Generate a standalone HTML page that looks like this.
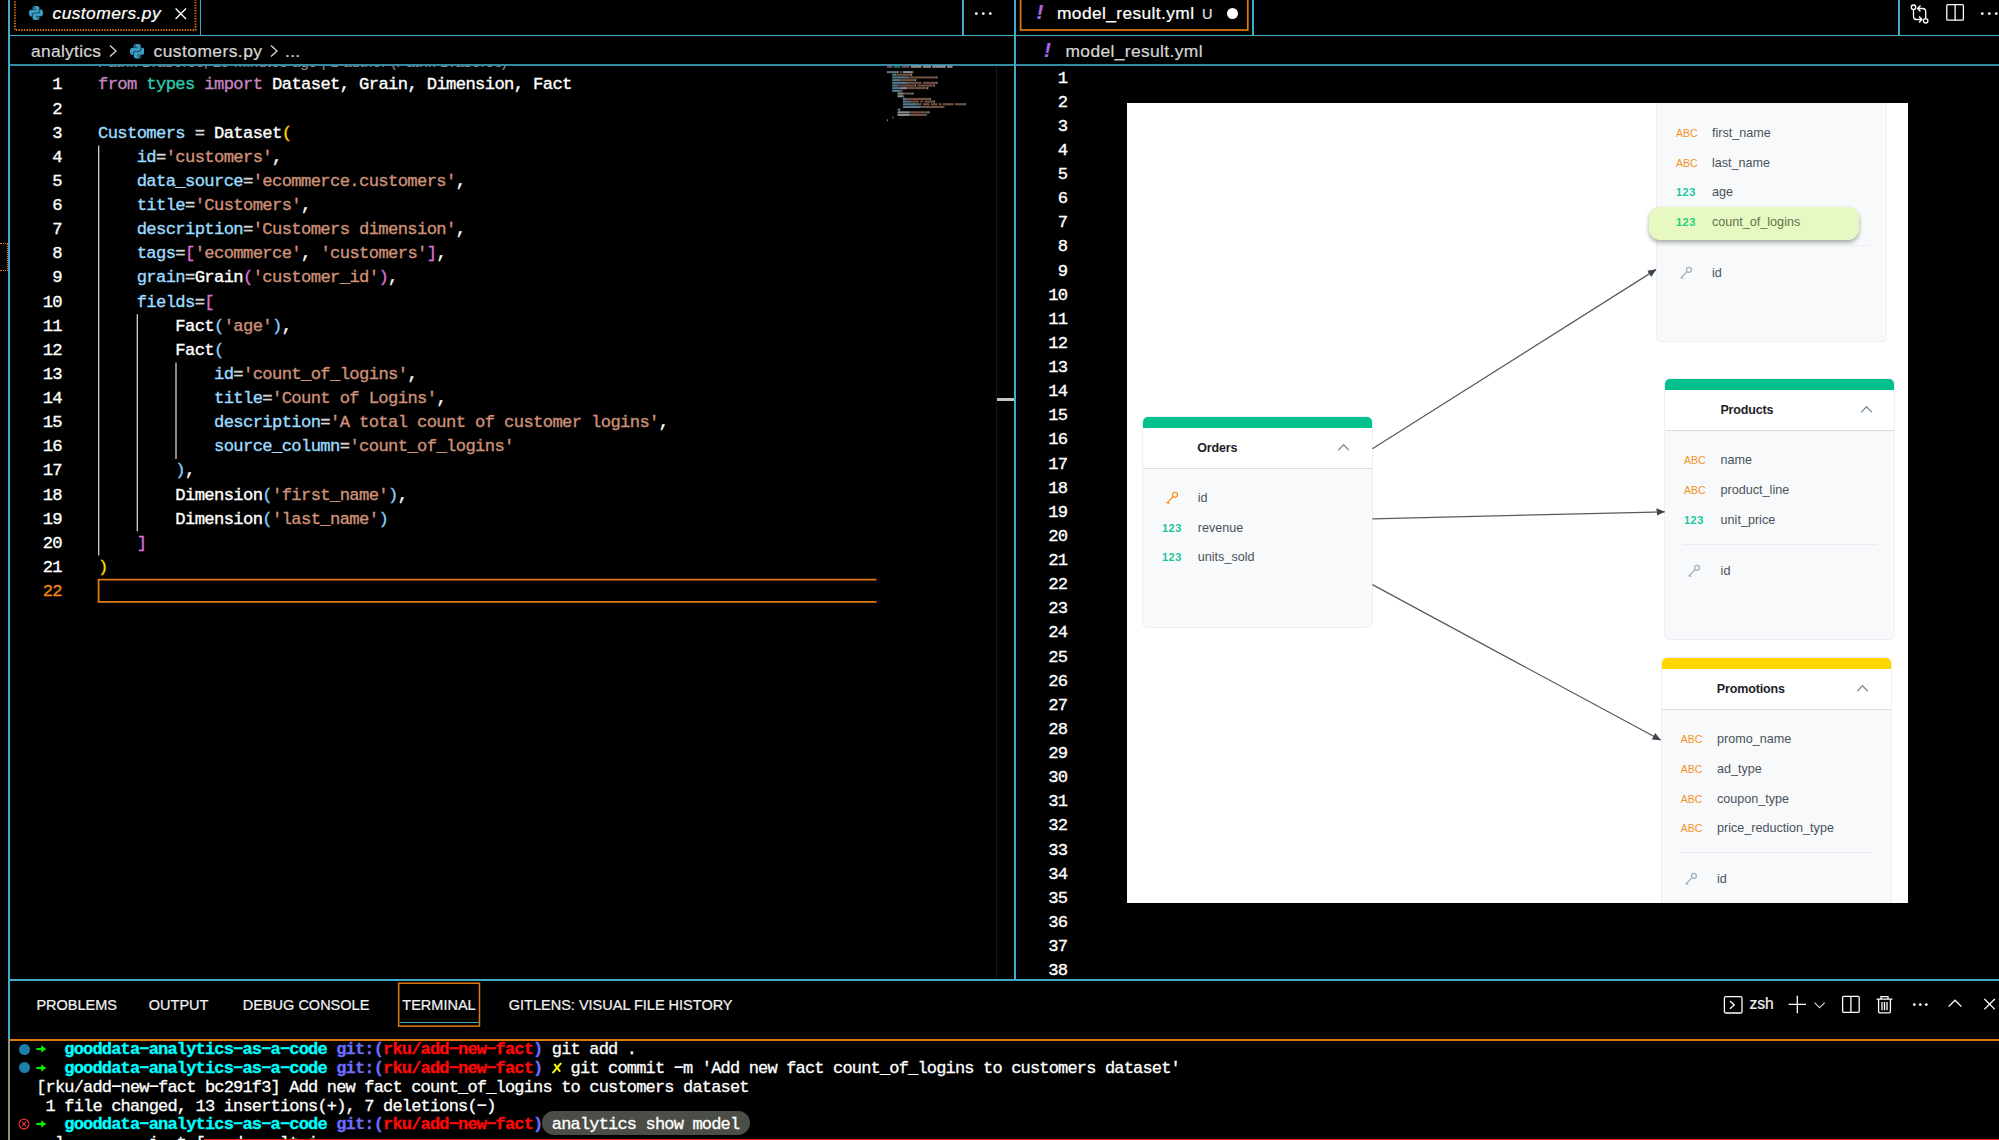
<!DOCTYPE html>
<html><head><meta charset="utf-8">
<style>
html,body{margin:0;padding:0;background:#000;overflow:hidden;}
body{width:1999px;height:1140px;overflow:hidden;position:relative;font-family:"Liberation Sans",sans-serif;color:#fff;}
.abs{position:absolute;}
.cy{position:absolute;background:#43a9c9;}
.or{position:absolute;background:#e07a10;}
.ui{-webkit-text-stroke:.22px;position:absolute;white-space:nowrap;font-family:"Liberation Sans",sans-serif;color:#fff;}
.code{position:absolute;left:0;top:0;font-family:"Liberation Mono",monospace;font-size:17.2px;letter-spacing:-0.6467px;line-height:24.125px;white-space:pre;color:#fff;}
.ln{position:absolute;font-family:"Liberation Mono",monospace;font-size:17.2px;letter-spacing:-0.6467px;line-height:24.125px;white-space:pre;color:#fff;text-align:right;}
.k{color:#c586c0}.t{color:#30c8aa}.v{color:#9cdcfe}.s{color:#ce9178}.b1{color:#ffd700}.b2{color:#da70d6}.b3{color:#87cefa}.o{color:#d4d4d4}
.term{position:absolute;font-family:"Liberation Mono",monospace;font-size:15.62px;line-height:18.75px;white-space:pre;color:#fff;}
.term b{font-weight:bold}
.tc{color:#00ffff}.tb{color:#6c6cff}.tr{color:#ff0808}.tg{color:#00f000}.ty{color:#f0f000}

.dl{position:absolute;white-space:nowrap;font-family:"Liberation Sans",sans-serif;font-size:10.5px;line-height:14px;}
.abc{color:#f5921e;letter-spacing:0px}
.n123{color:#1cc59e;font-weight:bold;font-size:11px;letter-spacing:.5px}
.dt{position:absolute;white-space:nowrap;font-family:"Liberation Sans",sans-serif;font-size:12.6px;line-height:16px;color:#4a525a}
.dtitle{position:absolute;white-space:nowrap;font-family:"Liberation Sans",sans-serif;font-size:12.5px;line-height:17px;color:#1c2228;font-weight:bold;letter-spacing:-.15px}

.pt{top:995px;font-size:14.5px;line-height:20px;color:#f2f2f2;letter-spacing:0}
.term{font-size:17.0px;letter-spacing:-0.8267px;-webkit-text-stroke:.3px}
.code,.ln{-webkit-text-stroke:.35px}
</style></head><body>
<!-- frame lines -->
<div class="cy" style="left:8px;top:0;width:2px;height:1140px"></div>
<div class="cy" style="left:8px;top:35px;width:1991px;height:1.4px"></div>
<div class="cy" style="left:8px;top:64.4px;width:1991px;height:1.4px;opacity:.8"></div>
<div class="cy" style="left:1014px;top:0;width:2px;height:980px"></div>
<div class="cy" style="left:8px;top:979px;width:1991px;height:2px"></div>

<!-- left tab -->

<!-- left tab bar -->
<div class="cy" style="left:199.5px;top:0;width:1.6px;height:35px"></div>
<svg class="abs" style="left:0;top:0" width="220" height="36"><rect x="14.9" y="-5" width="180.6" height="35" fill="none" stroke="#d9730c" stroke-width="1.9" stroke-dasharray="1.34 1.34"/></svg>
<svg class="abs" style="left:29px;top:5.8px" width="14" height="14" viewBox="0 0 24 24"><path fill="#3a9bc2" d="M14.25.18l.9.2.73.26.59.3.45.32.34.34.25.34.16.33.1.3.04.26.02.2-.01.13V8.5l-.05.63-.13.55-.21.46-.26.38-.3.31-.33.25-.35.19-.35.14-.33.1-.3.07-.26.04-.21.02H8.77l-.69.05-.59.14-.5.22-.41.27-.33.32-.27.35-.2.36-.15.37-.1.35-.07.32-.04.27-.02.21v3.06H3.17l-.21-.03-.28-.07-.32-.12-.35-.18-.36-.26-.36-.36-.35-.46-.32-.59-.28-.73-.21-.88-.14-1.05-.05-1.23.06-1.22.16-1.04.24-.87.32-.71.36-.57.4-.44.42-.33.42-.24.4-.16.36-.1.32-.05.24-.01h.16l.06.01h8.16v-.83H6.18l-.01-2.75-.02-.37.05-.34.11-.31.17-.28.25-.26.31-.23.38-.2.44-.18.51-.15.58-.12.64-.1.71-.06.77-.04.84-.02 1.27.05zm-6.3 1.98l-.23.33-.08.41.08.41.23.34.33.22.41.09.41-.09.33-.22.23-.34.08-.41-.08-.41-.23-.33-.33-.22-.41-.09-.41.09zm13.09 3.95l.28.06.32.12.35.18.36.27.36.35.35.47.32.59.28.73.21.88.14 1.04.05 1.23-.06 1.23-.16 1.04-.24.86-.32.71-.36.57-.4.45-.42.33-.42.24-.4.16-.36.09-.32.05-.24.02-.16-.01h-8.22v.82h5.84l.01 2.76.02.36-.05.34-.11.31-.17.29-.25.25-.31.24-.38.2-.44.17-.51.15-.58.13-.64.09-.71.07-.77.04-.84.01-1.27-.04-1.07-.14-.9-.2-.73-.25-.59-.3-.45-.33-.34-.34-.25-.34-.16-.33-.1-.3-.04-.25-.02-.2.01-.13v-5.34l.05-.64.13-.54.21-.46.26-.38.3-.32.33-.24.35-.2.35-.14.33-.1.3-.06.26-.04.21-.02.13-.01h5.84l.69-.05.59-.14.5-.21.41-.28.33-.32.27-.35.2-.36.15-.36.1-.35.07-.32.04-.28.02-.21V6.07h2.09l.14.01zm-6.47 14.25l-.23.33-.08.41.08.41.23.33.33.23.41.08.41-.08.33-.23.23-.33.08-.41-.08-.41-.23-.33-.33-.23-.41-.08-.41.08z"/></svg>
<div class="ui" style="left:52.5px;top:2px;font-size:17.4px;line-height:22px;font-style:italic;letter-spacing:.43px">customers.py</div>
<svg class="abs" style="left:174px;top:6px" width="14" height="14" viewBox="0 0 14 14"><path d="M1.6 2.6L12 13M12 2.6L1.6 13" stroke="#fff" stroke-width="1.35" fill="none"/></svg>
<div class="cy" style="left:962px;top:0;width:1.5px;height:35px"></div>
<svg class="abs" style="left:974px;top:10px" width="20" height="8"><circle cx="2.3" cy="3.6" r="1.35" fill="#fff"/><circle cx="9.3" cy="3.6" r="1.35" fill="#fff"/><circle cx="16.3" cy="3.6" r="1.35" fill="#fff"/></svg>
<!-- left breadcrumb -->
<div class="ui" style="left:31px;top:40px;font-size:17.4px;line-height:22px;letter-spacing:.3px;color:#d6d6d6">analytics</div>
<svg class="abs" style="left:108px;top:44px" width="10" height="14" viewBox="0 0 10 14"><path d="M2 1.5L8 7L2 12.5" stroke="#d8d8d8" stroke-width="1.3" fill="none"/></svg>
<svg class="abs" style="left:129.5px;top:44px" width="14.5" height="14.5" viewBox="0 0 24 24"><path fill="#3a9bc2" d="M14.25.18l.9.2.73.26.59.3.45.32.34.34.25.34.16.33.1.3.04.26.02.2-.01.13V8.5l-.05.63-.13.55-.21.46-.26.38-.3.31-.33.25-.35.19-.35.14-.33.1-.3.07-.26.04-.21.02H8.77l-.69.05-.59.14-.5.22-.41.27-.33.32-.27.35-.2.36-.15.37-.1.35-.07.32-.04.27-.02.21v3.06H3.17l-.21-.03-.28-.07-.32-.12-.35-.18-.36-.26-.36-.36-.35-.46-.32-.59-.28-.73-.21-.88-.14-1.05-.05-1.23.06-1.22.16-1.04.24-.87.32-.71.36-.57.4-.44.42-.33.42-.24.4-.16.36-.1.32-.05.24-.01h.16l.06.01h8.16v-.83H6.18l-.01-2.75-.02-.37.05-.34.11-.31.17-.28.25-.26.31-.23.38-.2.44-.18.51-.15.58-.12.64-.1.71-.06.77-.04.84-.02 1.27.05zm-6.3 1.98l-.23.33-.08.41.08.41.23.34.33.22.41.09.41-.09.33-.22.23-.34.08-.41-.08-.41-.23-.33-.33-.22-.41-.09-.41.09zm13.09 3.95l.28.06.32.12.35.18.36.27.36.35.35.47.32.59.28.73.21.88.14 1.04.05 1.23-.06 1.23-.16 1.04-.24.86-.32.71-.36.57-.4.45-.42.33-.42.24-.4.16-.36.09-.32.05-.24.02-.16-.01h-8.22v.82h5.84l.01 2.76.02.36-.05.34-.11.31-.17.29-.25.25-.31.24-.38.2-.44.17-.51.15-.58.13-.64.09-.71.07-.77.04-.84.01-1.27-.04-1.07-.14-.9-.2-.73-.25-.59-.3-.45-.33-.34-.34-.25-.34-.16-.33-.1-.3-.04-.25-.02-.2.01-.13v-5.34l.05-.64.13-.54.21-.46.26-.38.3-.32.33-.24.35-.2.35-.14.33-.1.3-.06.26-.04.21-.02.13-.01h5.84l.69-.05.59-.14.5-.21.41-.28.33-.32.27-.35.2-.36.15-.36.1-.35.07-.32.04-.28.02-.21V6.07h2.09l.14.01zm-6.47 14.25l-.23.33-.08.41.08.41.23.33.33.23.41.08.41-.08.33-.23.23-.33.08-.41-.08-.41-.23-.33-.33-.23-.41-.08-.41.08z"/></svg>
<div class="ui" style="left:153.6px;top:40px;font-size:17.4px;line-height:22px;letter-spacing:.45px;color:#d6d6d6">customers.py</div>
<svg class="abs" style="left:269px;top:44px" width="10" height="14" viewBox="0 0 10 14"><path d="M2 1.5L8 7L2 12.5" stroke="#d8d8d8" stroke-width="1.3" fill="none"/></svg>
<div class="ui" style="left:285px;top:40px;font-size:17.4px;line-height:22px;letter-spacing:.3px;color:#d6d6d6">...</div>

<!-- right tab -->

<!-- right tab bar -->
<svg class="abs" style="left:1010px;top:0" width="250" height="36"><rect x="10.6" y="-5" width="227.2" height="35" fill="none" stroke="#e07a10" stroke-width="1.7"/></svg>
<div class="cy" style="left:1252px;top:0;width:1.5px;height:35px"></div>
<div class="ui" style="left:1036.5px;top:1px;font-size:20.5px;line-height:22px;font-style:italic;color:#a967e0;font-weight:bold">!</div>
<div class="ui" style="left:1057px;top:2px;font-size:17.4px;line-height:22px;letter-spacing:.37px">model_result.yml</div>
<div class="ui" style="left:1202px;top:4px;font-size:14.5px;line-height:20px;color:#e0e0e0">U</div>
<div class="abs" style="left:1227px;top:8px;width:11px;height:11px;border-radius:50%;background:#fff"></div>
<div class="cy" style="left:1898.4px;top:0;width:1.5px;height:35px"></div>
<!-- right actions -->
<svg class="abs" style="left:1908px;top:2px" width="24" height="24" viewBox="0 0 24 24" fill="none" stroke="#fff" stroke-width="1.3"><circle cx="5.5" cy="5.2" r="2.2"/><circle cx="17.7" cy="18.8" r="2.2"/><path d="M5.5 7.4V14.5a3 3 0 0 0 3 3H13.5M11 14.5l3 3-3 3"/><path d="M17.7 16.6V9.5a3 3 0 0 0-3-3H10M12.5 3.5l-3 3 3 3"/></svg>
<svg class="abs" style="left:1945px;top:3px" width="22" height="20" viewBox="0 0 22 20" fill="none" stroke="#fff" stroke-width="1.3"><rect x="1.8" y="1.6" width="16.6" height="15.6" rx="1"/><path d="M10.1 1.6V17.2"/></svg>
<svg class="abs" style="left:1980px;top:10px" width="20" height="8"><circle cx="2.3" cy="3.6" r="1.35" fill="#fff"/><circle cx="9.3" cy="3.6" r="1.35" fill="#fff"/><circle cx="16.3" cy="3.6" r="1.35" fill="#fff"/></svg>
<!-- right breadcrumb -->
<div class="ui" style="left:1044px;top:39px;font-size:20.5px;line-height:22px;font-style:italic;color:#a967e0;font-weight:bold">!</div>
<div class="ui" style="left:1065.5px;top:40px;font-size:17.4px;line-height:22px;letter-spacing:.37px;color:#d6d6d6">model_result.yml</div>

<!-- left editor -->

<!-- left editor -->
<div class="abs" style="left:10px;top:66px;width:1004px;height:12px;overflow:hidden"><div class="ui" style="left:88px;top:-13.2px;font-size:14.6px;line-height:18px;color:#8c8c8c;letter-spacing:.35px">Patrik Braborec, 15 minutes ago | 1 author (Patrik Braborec)</div></div>
<div class="ln" style="left:19.4px;top:73.45px;width:42.6px">1
2
3
4
5
6
7
8
9
10
11
12
13
14
15
16
17
18
19
20
21
<span style="color:#f38518">22</span></div>
<div class="code" style="left:98px;top:73.45px"><span class="k">from</span> <span class="t">types</span> <span class="k">import</span> Dataset, Grain, Dimension, Fact

<span class="v">Customers</span> <span class="o">=</span> Dataset<span class="b1">(</span>
    <span class="v">id</span><span class="o">=</span><span class="s">'customers'</span>,
    <span class="v">data_source</span><span class="o">=</span><span class="s">'ecommerce.customers'</span>,
    <span class="v">title</span><span class="o">=</span><span class="s">'Customers'</span>,
    <span class="v">description</span><span class="o">=</span><span class="s">'Customers dimension'</span>,
    <span class="v">tags</span><span class="o">=</span><span class="b2">[</span><span class="s">'ecommerce'</span>, <span class="s">'customers'</span><span class="b2">]</span>,
    <span class="v">grain</span><span class="o">=</span>Grain<span class="b2">(</span><span class="s">'customer_id'</span><span class="b2">)</span>,
    <span class="v">fields</span><span class="o">=</span><span class="b2">[</span>
        Fact<span class="b3">(</span><span class="s">'age'</span><span class="b3">)</span>,
        Fact<span class="b3">(</span>
            <span class="v">id</span><span class="o">=</span><span class="s">'count_of_logins'</span>,
            <span class="v">title</span><span class="o">=</span><span class="s">'Count of Logins'</span>,
            <span class="v">description</span><span class="o">=</span><span class="s">'A total count of customer logins'</span>,
            <span class="v">source_column</span><span class="o">=</span><span class="s">'count_of_logins'</span>
        <span class="b3">)</span>,
        Dimension<span class="b3">(</span><span class="s">'first_name'</span><span class="b3">)</span>,
        Dimension<span class="b3">(</span><span class="s">'last_name'</span><span class="b3">)</span>
    <span class="b2">]</span>
<span class="b1">)</span>
</div>
<svg class="abs" style="left:90px;top:570px" width="790" height="40"><path d="M786.5 9.7H8.6V31.9H786.5" fill="none" stroke="#e07a10" stroke-width="1.8"/></svg>
<svg class="abs" style="left:0;top:0" width="300" height="700"><g stroke="#d2d2d2" stroke-width="1.3"><path d="M98.7 145.5V555.4M137.3 314.3V531.3M176 362.5V458.9"/></g></svg>
<!-- scrollbar / overview -->
<div class="abs" style="left:995.5px;top:66px;width:1.5px;height:913px;background:#181818"></div>
<div class="abs" style="left:997px;top:398px;width:17px;height:2.6px;background:#c4c4c4"></div>
<div class="abs" style="left:0;top:243px;width:8px;height:28px;box-sizing:border-box;border:1.4px dotted #e07a10;border-left:none"></div>
<svg class="abs" style="left:0;top:0" width="1020" height="130" opacity=".55"><rect x="886.8" y="65.7" width="5.4" height="2.1" fill="#c586c0"/><rect x="893.5" y="65.7" width="6.7" height="2.1" fill="#3ec9b0"/><rect x="901.5" y="65.7" width="8.0" height="2.1" fill="#c586c0"/><rect x="910.9" y="65.7" width="10.7" height="2.1" fill="#ffffff"/><rect x="923.0" y="65.7" width="8.0" height="2.1" fill="#ffffff"/><rect x="932.3" y="65.7" width="13.4" height="2.1" fill="#ffffff"/><rect x="947.1" y="65.7" width="5.4" height="2.1" fill="#ffffff"/><rect x="886.8" y="71.1" width="12.1" height="2.1" fill="#9cdcfe"/><rect x="900.2" y="71.1" width="1.3" height="2.1" fill="#d4d4d4"/><rect x="902.9" y="71.1" width="9.4" height="2.1" fill="#ffffff"/><rect x="912.2" y="71.1" width="1.3" height="2.1" fill="#ffd700"/><rect x="892.2" y="73.7" width="2.7" height="2.1" fill="#9cdcfe"/><rect x="894.8" y="73.7" width="1.3" height="2.1" fill="#d4d4d4"/><rect x="896.2" y="73.7" width="14.7" height="2.1" fill="#ce9178"/><rect x="910.9" y="73.7" width="1.3" height="2.1" fill="#ffffff"/><rect x="892.2" y="76.4" width="14.7" height="2.1" fill="#9cdcfe"/><rect x="906.9" y="76.4" width="1.3" height="2.1" fill="#d4d4d4"/><rect x="908.2" y="76.4" width="28.1" height="2.1" fill="#ce9178"/><rect x="936.3" y="76.4" width="1.3" height="2.1" fill="#ffffff"/><rect x="892.2" y="79.1" width="6.7" height="2.1" fill="#9cdcfe"/><rect x="898.9" y="79.1" width="1.3" height="2.1" fill="#d4d4d4"/><rect x="900.2" y="79.1" width="14.7" height="2.1" fill="#ce9178"/><rect x="914.9" y="79.1" width="1.3" height="2.1" fill="#ffffff"/><rect x="892.2" y="81.8" width="14.7" height="2.1" fill="#9cdcfe"/><rect x="906.9" y="81.8" width="1.3" height="2.1" fill="#d4d4d4"/><rect x="908.2" y="81.8" width="13.4" height="2.1" fill="#ce9178"/><rect x="923.0" y="81.8" width="13.4" height="2.1" fill="#ce9178"/><rect x="936.3" y="81.8" width="1.3" height="2.1" fill="#ffffff"/><rect x="892.2" y="84.5" width="5.4" height="2.1" fill="#9cdcfe"/><rect x="897.5" y="84.5" width="1.3" height="2.1" fill="#d4d4d4"/><rect x="898.9" y="84.5" width="1.3" height="2.1" fill="#da70d6"/><rect x="900.2" y="84.5" width="14.7" height="2.1" fill="#ce9178"/><rect x="914.9" y="84.5" width="1.3" height="2.1" fill="#ffffff"/><rect x="917.6" y="84.5" width="14.7" height="2.1" fill="#ce9178"/><rect x="932.3" y="84.5" width="1.3" height="2.1" fill="#da70d6"/><rect x="933.7" y="84.5" width="1.3" height="2.1" fill="#ffffff"/><rect x="892.2" y="87.1" width="6.7" height="2.1" fill="#9cdcfe"/><rect x="898.9" y="87.1" width="1.3" height="2.1" fill="#d4d4d4"/><rect x="900.2" y="87.1" width="6.7" height="2.1" fill="#ffffff"/><rect x="906.9" y="87.1" width="1.3" height="2.1" fill="#da70d6"/><rect x="908.2" y="87.1" width="17.4" height="2.1" fill="#ce9178"/><rect x="925.6" y="87.1" width="1.3" height="2.1" fill="#da70d6"/><rect x="927.0" y="87.1" width="1.3" height="2.1" fill="#ffffff"/><rect x="892.2" y="89.8" width="8.0" height="2.1" fill="#9cdcfe"/><rect x="900.2" y="89.8" width="1.3" height="2.1" fill="#d4d4d4"/><rect x="901.5" y="89.8" width="1.3" height="2.1" fill="#da70d6"/><rect x="897.5" y="92.5" width="5.4" height="2.1" fill="#ffffff"/><rect x="902.9" y="92.5" width="1.3" height="2.1" fill="#87cefa"/><rect x="904.2" y="92.5" width="6.7" height="2.1" fill="#ce9178"/><rect x="910.9" y="92.5" width="1.3" height="2.1" fill="#87cefa"/><rect x="912.2" y="92.5" width="1.3" height="2.1" fill="#ffffff"/><rect x="897.5" y="95.2" width="5.4" height="2.1" fill="#ffffff"/><rect x="902.9" y="95.2" width="1.3" height="2.1" fill="#87cefa"/><rect x="902.9" y="97.9" width="2.7" height="2.1" fill="#9cdcfe"/><rect x="905.5" y="97.9" width="1.3" height="2.1" fill="#d4d4d4"/><rect x="906.9" y="97.9" width="22.8" height="2.1" fill="#ce9178"/><rect x="929.6" y="97.9" width="1.3" height="2.1" fill="#ffffff"/><rect x="902.9" y="100.5" width="6.7" height="2.1" fill="#9cdcfe"/><rect x="909.6" y="100.5" width="1.3" height="2.1" fill="#d4d4d4"/><rect x="910.9" y="100.5" width="8.0" height="2.1" fill="#ce9178"/><rect x="920.3" y="100.5" width="2.7" height="2.1" fill="#ce9178"/><rect x="924.3" y="100.5" width="9.4" height="2.1" fill="#ce9178"/><rect x="933.7" y="100.5" width="1.3" height="2.1" fill="#ffffff"/><rect x="902.9" y="103.2" width="14.7" height="2.1" fill="#9cdcfe"/><rect x="917.6" y="103.2" width="1.3" height="2.1" fill="#d4d4d4"/><rect x="918.9" y="103.2" width="2.7" height="2.1" fill="#ce9178"/><rect x="923.0" y="103.2" width="6.7" height="2.1" fill="#ce9178"/><rect x="931.0" y="103.2" width="6.7" height="2.1" fill="#ce9178"/><rect x="939.0" y="103.2" width="2.7" height="2.1" fill="#ce9178"/><rect x="943.0" y="103.2" width="10.7" height="2.1" fill="#ce9178"/><rect x="955.1" y="103.2" width="9.4" height="2.1" fill="#ce9178"/><rect x="964.5" y="103.2" width="1.3" height="2.1" fill="#ffffff"/><rect x="902.9" y="105.9" width="17.4" height="2.1" fill="#9cdcfe"/><rect x="920.3" y="105.9" width="1.3" height="2.1" fill="#d4d4d4"/><rect x="921.6" y="105.9" width="22.8" height="2.1" fill="#ce9178"/><rect x="897.5" y="108.6" width="1.3" height="2.1" fill="#87cefa"/><rect x="898.9" y="108.6" width="1.3" height="2.1" fill="#ffffff"/><rect x="897.5" y="111.3" width="12.1" height="2.1" fill="#ffffff"/><rect x="909.6" y="111.3" width="1.3" height="2.1" fill="#87cefa"/><rect x="910.9" y="111.3" width="16.1" height="2.1" fill="#ce9178"/><rect x="927.0" y="111.3" width="1.3" height="2.1" fill="#87cefa"/><rect x="928.3" y="111.3" width="1.3" height="2.1" fill="#ffffff"/><rect x="897.5" y="113.9" width="12.1" height="2.1" fill="#ffffff"/><rect x="909.6" y="113.9" width="1.3" height="2.1" fill="#87cefa"/><rect x="910.9" y="113.9" width="14.7" height="2.1" fill="#ce9178"/><rect x="925.6" y="113.9" width="1.3" height="2.1" fill="#87cefa"/><rect x="892.2" y="116.6" width="1.3" height="2.1" fill="#da70d6"/><rect x="886.8" y="119.3" width="1.3" height="2.1" fill="#ffd700"/></svg>

<!-- right editor -->

<!-- right editor -->
<div class="ln" style="left:1029.2px;top:66.55px;width:38.3px">1
2
3
4
5
6
7
8
9
10
11
12
13
14
15
16
17
18
19
20
21
22
23
24
25
26
27
28
29
30
31
32
33
34
35
36
37
38</div>
<div class="abs" style="left:1126.5px;top:103px;width:781.5px;height:799.5px;background:#fff;overflow:hidden"></div><div class="abs" style="left:1656px;top:103px;width:231px;height:239px;box-sizing:border-box;background:#f8f9fb;border-radius:0 0 5px 5px;border:1px solid #eceff3;border-top:none"></div><div class="dl abc" style="left:1676px;top:126.0px">ABC</div><div class="dt" style="left:1712px;top:125.0px">first_name</div><div class="dl abc" style="left:1676px;top:155.5px">ABC</div><div class="dt" style="left:1712px;top:154.5px">last_name</div><div class="dl n123" style="left:1676px;top:185.0px">123</div><div class="dt" style="left:1712px;top:184.0px">age</div><div class="abs" style="left:1649px;top:206.8px;width:209.6px;height:33px;border-radius:11px;background:#e8f8c2;box-shadow:0 2.5px 4.5px rgba(60,70,60,.45)"></div><div class="dl n123" style="left:1676px;top:215.0px;color:#20d47c">123</div><div class="dt" style="left:1712px;top:214.0px;color:#5f744c">count_of_logins</div><div class="abs" style="left:1675px;top:245.4px;width:194px;height:1px;background:#e9ecf0"></div><svg class="abs" style="left:1679.0px;top:265.5px" width="14" height="14" viewBox="0 0 14 14" fill="none" stroke="#9fb0c0" stroke-width="1.3"><circle cx="10" cy="3.8" r="2.5"/><path d="M8.2 5.6L1.6 12.2M2.6 11.2L4.2 12.8"/></svg><div class="dt" style="left:1712px;top:265.0px">id</div><div class="abs" style="left:1143px;top:417.3px;width:229px;height:209.7px;background:#f8f9fb;border-radius:5px;box-shadow:0 0 0 1px #eceff3;overflow:hidden"><div class="abs" style="left:0;top:0;width:100%;height:50.5px;background:#fff;border-bottom:1.6px solid #d5dde5"></div><div class="abs" style="left:0;top:0;width:100%;height:11.2px;background:#00c18d"></div></div><div class="dtitle" style="left:1197.2px;top:439.6px">Orders</div><svg class="abs" style="left:1337px;top:443.1px" width="13" height="9" viewBox="0 0 13 9"><path d="M1.2 7.2L6.5 1.8L11.8 7.2" fill="none" stroke="#7d8fa0" stroke-width="1.3"/></svg><svg class="abs" style="left:1165.0px;top:490.5px" width="14" height="14" viewBox="0 0 14 14" fill="none" stroke="#f5921e" stroke-width="1.3"><circle cx="10" cy="3.8" r="2.5"/><path d="M8.2 5.6L1.6 12.2M2.6 11.2L4.2 12.8"/></svg><div class="dt" style="left:1197.8px;top:490.0px">id</div><div class="dl n123" style="left:1162px;top:520.8px">123</div><div class="dt" style="left:1197.8px;top:519.8px">revenue</div><div class="dl n123" style="left:1162px;top:550.3px">123</div><div class="dt" style="left:1197.8px;top:549.3px">units_sold</div><div class="abs" style="left:1665.3px;top:379.3px;width:228.5px;height:259.7px;background:#f8f9fb;border-radius:5px;box-shadow:0 0 0 1px #eceff3;overflow:hidden"><div class="abs" style="left:0;top:0;width:100%;height:50.9px;background:#fff;border-bottom:1.6px solid #d5dde5"></div><div class="abs" style="left:0;top:0;width:100%;height:11.2px;background:#00c18d"></div></div><div class="dtitle" style="left:1720.4px;top:401.9px">Products</div><svg class="abs" style="left:1859.5px;top:405.4px" width="13" height="9" viewBox="0 0 13 9"><path d="M1.2 7.2L6.5 1.8L11.8 7.2" fill="none" stroke="#7d8fa0" stroke-width="1.3"/></svg><div class="dl abc" style="left:1684px;top:453.4px">ABC</div><div class="dt" style="left:1720.6px;top:452.4px">name</div><div class="dl abc" style="left:1684px;top:483.4px">ABC</div><div class="dt" style="left:1720.6px;top:482.4px">product_line</div><div class="dl n123" style="left:1684px;top:512.9px">123</div><div class="dt" style="left:1720.6px;top:511.9px">unit_price</div><div class="abs" style="left:1683px;top:544px;width:194px;height:1px;background:#e9ecf0"></div><svg class="abs" style="left:1687.0px;top:563.5px" width="14" height="14" viewBox="0 0 14 14" fill="none" stroke="#9fb0c0" stroke-width="1.3"><circle cx="10" cy="3.8" r="2.5"/><path d="M8.2 5.6L1.6 12.2M2.6 11.2L4.2 12.8"/></svg><div class="dt" style="left:1720.6px;top:563.0px">id</div><div class="abs" style="left:1650px;top:650px;width:258px;height:252.5px;overflow:hidden"><div class="abs" style="left:-1650px;top:-650px"><div class="abs" style="left:1661.8px;top:658px;width:228.8px;height:282.0px;background:#f8f9fb;border-radius:5px;box-shadow:0 0 0 1px #eceff3;overflow:hidden"><div class="abs" style="left:0;top:0;width:100%;height:51.0px;background:#fff;border-bottom:1.6px solid #d5dde5"></div><div class="abs" style="left:0;top:0;width:100%;height:11.2px;background:#ffd600"></div></div><div class="dtitle" style="left:1716.8px;top:680.6px">Promotions</div><svg class="abs" style="left:1856px;top:684.1px" width="13" height="9" viewBox="0 0 13 9"><path d="M1.2 7.2L6.5 1.8L11.8 7.2" fill="none" stroke="#7d8fa0" stroke-width="1.3"/></svg><div class="dl abc" style="left:1680.7px;top:732.0px">ABC</div><div class="dt" style="left:1717px;top:731.0px">promo_name</div><div class="dl abc" style="left:1680.7px;top:761.6px">ABC</div><div class="dt" style="left:1717px;top:760.6px">ad_type</div><div class="dl abc" style="left:1680.7px;top:791.5px">ABC</div><div class="dt" style="left:1717px;top:790.5px">coupon_type</div><div class="dl abc" style="left:1680.7px;top:821.0px">ABC</div><div class="dt" style="left:1717px;top:820.0px">price_reduction_type</div><div class="abs" style="left:1679px;top:851.8px;width:195px;height:1px;background:#e9ecf0"></div><svg class="abs" style="left:1683.7px;top:871.5px" width="14" height="14" viewBox="0 0 14 14" fill="none" stroke="#9fb0c0" stroke-width="1.3"><circle cx="10" cy="3.8" r="2.5"/><path d="M8.2 5.6L1.6 12.2M2.6 11.2L4.2 12.8"/></svg><div class="dt" style="left:1717px;top:871.0px">id</div></div></div><svg class="abs" style="left:0;top:0" width="1999" height="1140"><defs><marker id="ah" viewBox="0 0 10 10" refX="9.5" refY="5" markerWidth="8.5" markerHeight="8.5" orient="auto" markerUnits="userSpaceOnUse"><path d="M0 0.6L10 5L0 9.4z" fill="#3f464d"/></marker></defs>
<g stroke="#555b62" stroke-width="1.25" fill="none"><path d="M1372.4 448.8L1656 269.6" marker-end="url(#ah)"/><path d="M1372.4 518.8L1664.6 511.8" marker-end="url(#ah)"/><path d="M1372.4 584.6L1660.6 740" marker-end="url(#ah)"/></g></svg>

<!-- panel -->

<!-- panel tabs -->
<div class="ui pt" style="left:36.4px">PROBLEMS</div>
<div class="ui pt" style="left:148.8px">OUTPUT</div>
<div class="ui pt" style="left:242.8px">DEBUG CONSOLE</div>
<div class="ui pt" style="left:402.3px">TERMINAL</div>
<div class="ui pt" style="left:508.8px">GITLENS: VISUAL FILE HISTORY</div>
<svg class="abs" style="left:390px;top:975px" width="100" height="60"><rect x="8.7" y="8.2" width="80.8" height="42.9" fill="none" stroke="#e07a10" stroke-width="1.5"/></svg>
<div class="cy" style="left:399.5px;top:1021.6px;width:79px;height:1.3px"></div>
<!-- panel actions -->
<svg class="abs" style="left:1722px;top:994px" width="280" height="22" viewBox="0 0 280 22" fill="none" stroke="#fff" stroke-width="1.3">
<rect x="2.4" y="2.6" width="17.6" height="16.4" rx="1.6"/><path d="M8 7L12.2 10.9L8 14.8"/>
<path d="M66.6 10.4H84M75.3 1.8V19.2"/>
<path d="M92.5 8.6L97.6 13.6L102.7 8.6" stroke="#cfcfcf" stroke-width="1.2"/>
<rect x="120.6" y="2.4" width="16.6" height="16" rx="1.2"/><path d="M128.9 2.4V18.4"/>
<path d="M154.5 5.2H170.5M159 5V2.6H166V5M156.6 5.4V17.6A1.2 1.2 0 0 0 157.8 18.8H167.2A1.2 1.2 0 0 0 168.4 17.6V5.4M160 8V16.2M162.5 8V16.2M165 8V16.2"/>
<g fill="#fff" stroke="none"><circle cx="192.3" cy="10.6" r="1.35"/><circle cx="198.3" cy="10.6" r="1.35"/><circle cx="204.3" cy="10.6" r="1.35"/></g>
<path d="M226.6 12.6L233 6.2L239.4 12.6"/>
<path d="M262.4 5L272.8 15.4M272.8 5L262.4 15.4"/>
</svg>
<div class="ui" style="left:1749.5px;top:994px;font-size:15.6px;line-height:20px;color:#f0f0f0">zsh</div>
<!-- terminal -->
<div class="or" style="left:9px;top:1039.3px;width:1990px;height:1.9px"></div>
<div class="or" style="left:9px;top:1039.6px;width:1.4px;height:101px"></div>
<div class="abs" style="left:541.6px;top:1111.2px;width:208.6px;height:23.8px;border-radius:11.9px;background:#4b4e47"></div>
<div class="term" style="left:36.2px;top:1041.4px">   <b class="tc">gooddata−analytics−as−a−code</b> <b class="tb">git:(</b><b class="tr">rku/add−new−fact</b><b class="tb">)</b> git add .
   <b class="tc">gooddata−analytics−as−a−code</b> <b class="tb">git:(</b><b class="tr">rku/add−new−fact</b><b class="tb">)</b>   git commit −m 'Add new fact count_of_logins to customers dataset'
[rku/add−new−fact bc291f3] Add new fact count_of_logins to customers dataset
 1 file changed, 13 insertions(+), 7 deletions(−)
   <b class="tc">gooddata−analytics−as−a−code</b> <b class="tb">git:(</b><b class="tr">rku/add−new−fact</b><b class="tb">)</b> analytics show model
  l         i  t [   d    lt i</div>
<svg class="abs" style="left:35.7px;top:1044.1px" width="11" height="10" viewBox="0 0 11 10"><path d="M0.3 3.9H5.2V1.2L10.3 5L5.2 8.8V6.1H0.3z" fill="#00ee00"/></svg><svg class="abs" style="left:35.7px;top:1062.8px" width="11" height="10" viewBox="0 0 11 10"><path d="M0.3 3.9H5.2V1.2L10.3 5L5.2 8.8V6.1H0.3z" fill="#00ee00"/></svg><svg class="abs" style="left:35.7px;top:1119.1px" width="11" height="10" viewBox="0 0 11 10"><path d="M0.3 3.9H5.2V1.2L10.3 5L5.2 8.8V6.1H0.3z" fill="#00ee00"/></svg>
<div class="abs" style="left:18.6px;top:1043.6px;width:11px;height:11px;border-radius:50%;background:#1b81a8"></div><div class="abs" style="left:18.6px;top:1062.3px;width:11px;height:11px;border-radius:50%;background:#1b81a8"></div><svg class="abs" style="left:18px;top:1118.1px" width="12" height="12" viewBox="0 0 12 12" fill="none" stroke="#e5343a" stroke-width="1.2"><circle cx="6" cy="6" r="4.9"/><path d="M3.8 3.8L8.2 8.2M8.2 3.8L3.8 8.2"/></svg>
<svg class="abs" style="left:551.6px;top:1062px" width="11" height="13" viewBox="0 0 11 13"><path d="M1.2 10.4L8.6 1.6M2.9 2.6L7.6 9" stroke="#f4f400" stroke-width="2.1" stroke-linecap="round" fill="none"/></svg>
<div class="abs" style="left:204px;top:1138.7px;width:1795px;height:1.4px;background:#f01a1a"></div>

</body></html>
